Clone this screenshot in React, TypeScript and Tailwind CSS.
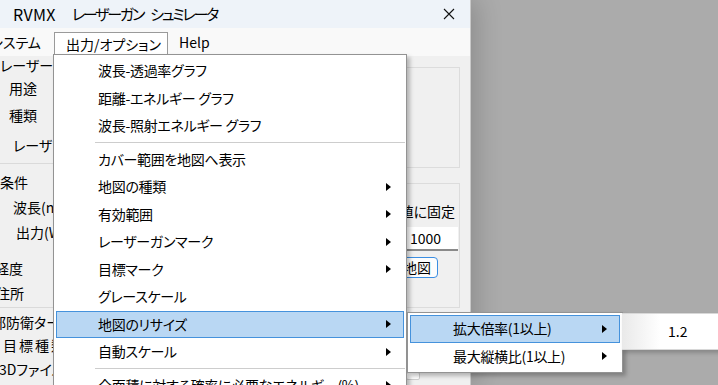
import React from 'react';

const Arrow = () => (
  <svg width="5" height="8" viewBox="0 0 5 8" className="shrink-0">
    <path d="M0 0 L5 4 L0 8 Z" fill="#000" />
  </svg>
);

type Item = { label: string; sub?: boolean; active?: boolean } | 'sep';

const mainItems: Item[] = [
  { label: '波長-透過率グラフ' },
  { label: '距離-エネルギー グラフ' },
  { label: '波長-照射エネルギー グラフ' },
  'sep',
  { label: 'カバー範囲を地図へ表示' },
  { label: '地図の種類', sub: true },
  { label: '有効範囲', sub: true },
  { label: 'レーザーガンマーク', sub: true },
  { label: '目標マーク', sub: true },
  { label: 'グレースケール' },
  { label: '地図のリサイズ', sub: true, active: true },
  { label: '自動スケール', sub: true },
  'sep',
  { label: '全面積に対する確率に必要なエネルギー(%)', sub: true },
];

function MenuRow({ label, sub, active, pl }: { label: string; sub?: boolean; active?: boolean; pl: string }) {
  return (
    <div
      className={`mx-[2px] h-[27.5px] shrink-0 flex items-center justify-between pr-[12px] border ${pl} ${
        active ? 'bg-[#b9d7f3] border-[#4592dc]' : 'border-transparent'
      }`}
    >
      <span className="whitespace-nowrap tracking-[-0.3px]">{label}</span>
      {sub && <Arrow />}
    </div>
  );
}

function LeftLabels() {
  return (
    <div className="w-[120px] flex flex-col text-[14px] text-black">
      <div className="h-[18px] flex items-center whitespace-nowrap">レーザーの諸元</div>
      <div className="mt-[2px] h-[24px] flex items-center pl-[9px]">用途</div>
      <div className="mt-[3px] h-[24px] flex items-center pl-[9px]">種類</div>
      <div className="mt-[6px] h-[24px] flex items-center pl-[13px] whitespace-nowrap">レーザーガン</div>
      <div className="mt-[6px] h-px bg-[#dadada]" />
      <div className="mt-[6px] h-[24px] flex items-center whitespace-nowrap">条件</div>
      <div className="mt-px h-[24px] flex items-center pl-[13px] whitespace-nowrap">波長(nm)</div>
      <div className="mt-px h-[24px] flex items-center pl-[16px] whitespace-nowrap">出力(W)</div>
      <div className="mt-[12px] h-[24px] flex items-center -ml-[5px]">経度</div>
      <div className="mt-px h-[24px] flex items-center -ml-[4px]">住所</div>
      <div className="mt-[2px] h-px bg-[#dadada]" />
      <div className="mt-[2px] h-[24px] flex items-center -ml-[8px] whitespace-nowrap">部防衛ターゲット</div>
      <div className="h-[23px] flex items-center pl-[3px] whitespace-nowrap tracking-[2px]">目標種類</div>
      <div className="h-[24px] flex items-center -ml-[1px] whitespace-nowrap">3Dファイル</div>
    </div>
  );
}

function RightPanel() {
  return (
    <div className="w-[64px] flex flex-col text-[14px] text-black">
      <div className="mt-[11px] h-[101px] w-[54px] border border-[#dcdcdc]" />
      <div className="mt-[15px] h-[125px] w-[54px] border border-[#dcdcdc] flex flex-col items-end pr-[4px]">
        <div className="mt-[16px] h-[22px] flex items-center whitespace-nowrap">値に固定</div>
        <div className="mt-[5px] h-[24px] w-[60px] bg-white border-b-2 border-[#8a8a8a] flex items-center pl-[12px] -mr-[3px]">
          1000
        </div>
        <div className="mt-[6px] h-[21px] w-[44px] self-start -ml-[13px] bg-[#fdfdfd] border border-[#3b8ee2] rounded-[4px] flex items-center pl-[8px]">
          地図
        </div>
      </div>
      <div className="mt-[64px] h-[8px] w-[14px] bg-white border border-[#cfcfcf] rounded-[2px]" />
    </div>
  );
}

export default function App() {
  return (
    <div className="relative w-[718px] h-[385px] overflow-hidden bg-[#ababab] flex font-['Noto_Sans_CJK_JP','Noto_Sans',sans-serif] [font-feature-settings:'palt'] text-black">
      <div className="w-[471px] h-full flex flex-col bg-[#f0f0f0] border-r border-[#c8c8c8] shadow-[6px_0_24px_rgba(0,0,0,0.18)]">
        <div className="h-[28px] bg-[#eef3f9] flex items-center justify-between pl-[13px] pr-[15px]">
          <div className="flex items-center text-[15px] whitespace-nowrap">
            <span className="text-[16px] tracking-[0.3px]">RVMX</span>
            <span className="ml-[16px] tracking-[-2.2px]">レーザーガン</span>
            <span className="ml-[7px] tracking-[-2.2px]">シュミレータ</span>
          </div>
          <svg width="12" height="12" viewBox="0 0 12 12">
            <path d="M1 1 L11 11 M11 1 L1 11" stroke="#111" strokeWidth="1.1" />
          </svg>
        </div>
        <div className="h-[28px] bg-[#f9f9f9] flex items-end text-[14px]">
          <div className="h-full flex items-center -ml-[10px] mr-[13px] whitespace-nowrap">システム</div>
          <div className="h-[24px] w-[114px] bg-white border border-b-0 border-[#9a9a9a] flex items-center pl-[11px] whitespace-nowrap">
            出力/オプション
          </div>
          <div className="h-full flex items-center pl-[11px]">Help</div>
        </div>
        <div className="flex-1 flex justify-between">
          <LeftLabels />
          <RightPanel />
        </div>
      </div>

      <div className="absolute left-[53px] top-[54px] w-[354px] h-[345px] bg-white border border-[#939393] shadow-[3px_3px_4px_rgba(0,0,0,0.25)] flex flex-col pt-[2px] text-[14px]">
        {mainItems.map((it, i) =>
          it === 'sep' ? (
            <div key={i} className="h-[6px] shrink-0 flex items-center pl-[41px] pr-px">
              <div className="h-px w-full bg-[#cdcdcd]" />
            </div>
          ) : (
            <MenuRow key={i} label={it.label} sub={it.sub} active={it.active} pl="pl-[41px]" />
          )
        )}
      </div>

      <div className="absolute left-[407px] top-[312px] w-[216px] h-[61px] bg-white border border-[#939393] shadow-[3px_3px_4px_rgba(0,0,0,0.25)] flex flex-col pt-[2px] text-[14px]">
        <MenuRow label="拡大倍率(1以上)" sub active pl="pl-[42px]" />
        <MenuRow label="最大縦横比(1以上)" sub pl="pl-[42px]" />
      </div>

      <div className="absolute left-[622px] top-[313px] w-[110px] h-[37px] bg-[linear-gradient(to_right,#e9e9e9,#ffffff_35%)] border-y border-[#d8d8d8] shadow-[2px_3px_4px_rgba(0,0,0,0.2)] flex items-center pl-[46px] text-[14px]">
        1.2
      </div>
    </div>
  );
}
